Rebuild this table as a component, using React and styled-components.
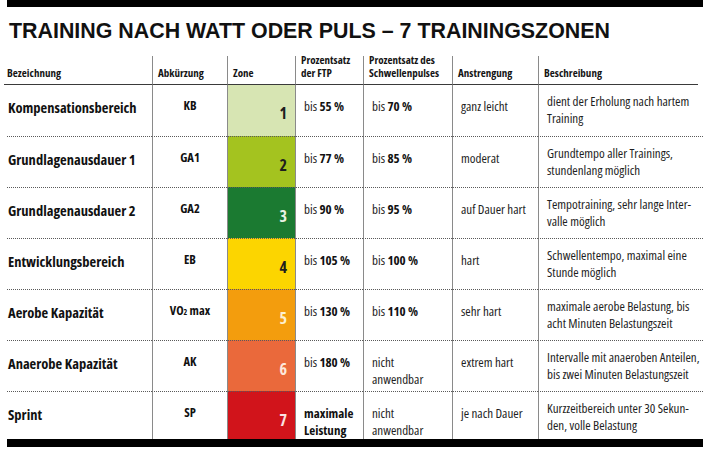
import React from 'react';
import styled, { createGlobalStyle } from 'styled-components';

const GlobalStyle = createGlobalStyle`
  html, body {
    margin: 0;
    padding: 0;
    background: #ffffff;
  }
  body {
    font-family: "Open Sans", sans-serif;
    font-stretch: 75%;
    color: #1e1e1e;
  }
`;

const Page = styled.div`
  width: 712px;
  height: 458px;
  padding: 0 9px 0 7px;
  box-sizing: border-box;
`;

const TopBar = styled.div`
  height: 7px;
  background: #000;
`;

const Title = styled.h1`
  margin: 0;
  padding: 12px 0 0 2px;
  height: 33px;
  box-sizing: border-box;
  font-family: "Liberation Sans", Arial, sans-serif;
  font-stretch: normal;
  font-size: 21.4px;
  line-height: 24px;
  font-weight: 700;
  color: #111;
  white-space: nowrap;
`;

const Table = styled.div`
  display: grid;
  grid-template-columns: 145px 75px 68px 68px 89px 86px 1fr;
  margin-top: 16px;
`;

const HeadCell = styled.div`
  height: 29px;
  box-sizing: border-box;
  display: flex;
  align-items: flex-end;
  padding: 0 2px 5px 5px;
  border-left: ${(p) => (p.$first ? 'none' : '1px solid #8a8a8a')};
  border-bottom: 1px solid #3a3a3a;
  font-size: 11px;
  line-height: 13px;
  font-weight: 700;
  color: #151515;
  white-space: nowrap;
  margin-left: ${(p) => (p.$first ? '-3px' : '0')};
  padding-left: ${(p) => (p.$first ? '3px' : '5px')};
  margin-right: ${(p) => (p.$last ? '5px' : '0')};
`;

const Cell = styled.div`
  height: ${(p) => (p.$lastRow ? '48px' : '51px')};
  box-sizing: border-box;
  border-left: ${(p) => (p.$first ? 'none' : '1px solid #8a8a8a')};
  border-top: ${(p) => (p.$firstRow ? 'none' : '1px dotted #5a5a5a')};
  font-size: 13px;
  line-height: 17px;
  padding: 13px 2px 0 8px;
  white-space: nowrap;
`;

const NameCell = styled(Cell)`
  padding: 15px 0 0 1px;
  line-height: 16px;
  font-size: 14.5px;
  font-weight: 700;
  color: #111;
`;

const AbbrCell = styled(Cell)`
  padding: 13px 0 0 0;
  line-height: 16px;
  text-align: center;
  font-weight: 700;
  font-size: 12.5px;
  color: #111;
`;

const ZoneCell = styled(Cell)`
  background: ${(p) => p.$bg};
  color: ${(p) => p.$fg};
  text-align: right;
  padding: 18px 8px 0 0;
  font-size: 16px;
  line-height: 20px;
  font-weight: 700;
`;

const DescCell = styled(Cell)`
  padding: 8px 0 0 8px;
`;

const Strong = styled.b`
  font-weight: 700;
  color: #111;
`;

const Sub = styled.span`
  font-size: 8px;
  vertical-align: 0;
`;

const BottomBar = styled.div`
  height: 8px;
  background: #000;
`;

const rows = [
  {
    name: 'Kompensationsbereich',
    abbr: 'KB',
    zone: 1,
    bg: '#d7e5b3',
    fg: '#1e1e1e',
    ftp: <>bis <Strong>55 %</Strong></>,
    puls: <>bis <Strong>70 %</Strong></>,
    effort: 'ganz leicht',
    desc: <>dient der Erholung nach hartem<br />Training</>,
  },
  {
    name: 'Grundlagenausdauer 1',
    abbr: 'GA1',
    zone: 2,
    bg: '#a4c31f',
    fg: '#1e1e1e',
    ftp: <>bis <Strong>77 %</Strong></>,
    puls: <>bis <Strong>85 %</Strong></>,
    effort: 'moderat',
    desc: <>Grundtempo aller Trainings,<br />stundenlang möglich</>,
  },
  {
    name: 'Grundlagenausdauer 2',
    abbr: 'GA2',
    zone: 3,
    bg: '#1b7a31',
    fg: '#e9f3e4',
    ftp: <>bis <Strong>90 %</Strong></>,
    puls: <>bis <Strong>95 %</Strong></>,
    effort: 'auf Dauer hart',
    desc: <>Tempotraining, sehr lange Inter-<br />valle möglich</>,
  },
  {
    name: 'Entwicklungsbereich',
    abbr: 'EB',
    zone: 4,
    bg: '#fcd500',
    fg: '#1e1e1e',
    ftp: <>bis <Strong>105 %</Strong></>,
    puls: <>bis <Strong>100 %</Strong></>,
    effort: 'hart',
    desc: <>Schwellentempo, maximal eine<br />Stunde möglich</>,
  },
  {
    name: 'Aerobe Kapazität',
    abbr: <>VO<Sub>2</Sub> max</>,
    zone: 5,
    bg: '#f39d0d',
    fg: '#fdf0d0',
    ftp: <>bis <Strong>130 %</Strong></>,
    puls: <>bis <Strong>110 %</Strong></>,
    effort: 'sehr hart',
    desc: <>maximale aerobe Belastung, bis<br />acht Minuten Belastungszeit</>,
  },
  {
    name: 'Anaerobe Kapazität',
    abbr: 'AK',
    zone: 6,
    bg: '#ea693b',
    fg: '#fde8dc',
    ftp: <>bis <Strong>180 %</Strong></>,
    puls: <>nicht<br />anwendbar</>,
    effort: 'extrem hart',
    desc: <>Intervalle mit anaeroben Anteilen,<br />bis zwei Minuten Belastungszeit</>,
  },
  {
    name: 'Sprint',
    abbr: 'SP',
    zone: 7,
    bg: '#d1141b',
    fg: '#fbe3e3',
    ftp: <Strong>maximale<br />Leistung</Strong>,
    puls: <>nicht<br />anwendbar</>,
    effort: 'je nach Dauer',
    desc: <>Kurzzeitbereich unter 30 Sekun-<br />den, volle Belastung</>,
  },
];

export default function App() {
  return (
    <Page>
      <GlobalStyle />
      <TopBar />
      <Title>TRAINING NACH WATT ODER PULS – 7 TRAININGSZONEN</Title>
      <Table>
        <HeadCell $first>Bezeichnung</HeadCell>
        <HeadCell>Abkürzung</HeadCell>
        <HeadCell>Zone</HeadCell>
        <HeadCell>Prozentsatz<br />der FTP</HeadCell>
        <HeadCell>Prozentsatz des<br />Schwellenpulses</HeadCell>
        <HeadCell>Anstrengung</HeadCell>
        <HeadCell $last>Beschreibung</HeadCell>
        {rows.map((r, i) => {
          const flags = { $firstRow: i === 0, $lastRow: i === rows.length - 1 };
          return (
            <React.Fragment key={r.zone}>
              <NameCell $first {...flags}>{r.name}</NameCell>
              <AbbrCell {...flags}>{r.abbr}</AbbrCell>
              <ZoneCell {...flags} $bg={r.bg} $fg={r.fg}>{r.zone}</ZoneCell>
              <Cell {...flags}>{r.ftp}</Cell>
              <Cell {...flags}>{r.puls}</Cell>
              <Cell {...flags}>{r.effort}</Cell>
              <DescCell {...flags}>{r.desc}</DescCell>
            </React.Fragment>
          );
        })}
      </Table>
      <BottomBar />
    </Page>
  );
}
